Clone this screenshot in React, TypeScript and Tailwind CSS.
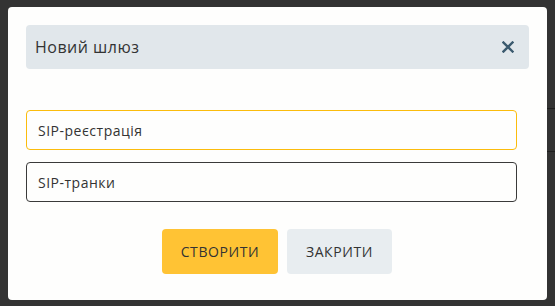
import React from "react";

function CloseIcon() {
    return (
        <svg width="12" height="12" viewBox="0 0 12 12" fill="none">
            <path d="M1.5 1.5 L10.5 10.5 M10.5 1.5 L1.5 10.5" stroke="#3b5a6e" strokeWidth="2.4" strokeLinecap="square" />
        </svg>
    );
}

export default function App() {
    return (
        <div className="h-[306px] w-[555px] overflow-hidden bg-[#333333] flex pt-[7px] pl-[8px]"
             style={{ fontFamily: "'Open Sans', 'Noto Sans', sans-serif" }}>
            <div className="w-[539px] h-[293px] bg-[#fefefd] rounded-[4px] pt-[18px] pl-[18px] pr-[18px]">
                {/* header */}
                <div className="h-[44px] bg-[#e1e7eb] rounded-[4px] flex items-center justify-between pl-[9px] pr-[15px]">
                    <span className="text-[16px] text-[#333333] tracking-[0.5px]">Новий шлюз</span>
                    <button className="flex items-center justify-center">
                        <CloseIcon />
                    </button>
                </div>

                {/* options */}
                <div className="mt-[41px] w-[491px] flex flex-col gap-[12px]">
                    <div className="h-[40px] border border-[#fbbc0c] rounded-[4px] flex items-center pl-[11px] text-[14px] text-[#333333] tracking-[0.5px]">
                        SIP-реєстрація
                    </div>
                    <div className="h-[40px] border border-[#3a3a3a] rounded-[4px] flex items-center pl-[11px] text-[14px] text-[#333333] tracking-[0.5px]">
                        SIP-транки
                    </div>
                </div>

                {/* actions */}
                <div className="mt-[27px] flex justify-center gap-[9px] pr-[1px]">
                    <button className="w-[116px] h-[45px] bg-[#ffc334] rounded-[4px] text-[14px] text-[#333333] tracking-[0.6px]">
                        СТВОРИТИ
                    </button>
                    <button className="w-[105px] h-[45px] bg-[#e8edf0] rounded-[4px] text-[14px] text-[#333333] tracking-[0.6px]">
                        ЗАКРИТИ
                    </button>
                </div>
            </div>
            <div className="flex-1 flex flex-col">
                <div className="h-[102px] border-b border-[#1e1e1e]" />
                <div className="h-[43px] border-b border-[#1e1e1e]" />
            </div>
        </div>
    );
}
